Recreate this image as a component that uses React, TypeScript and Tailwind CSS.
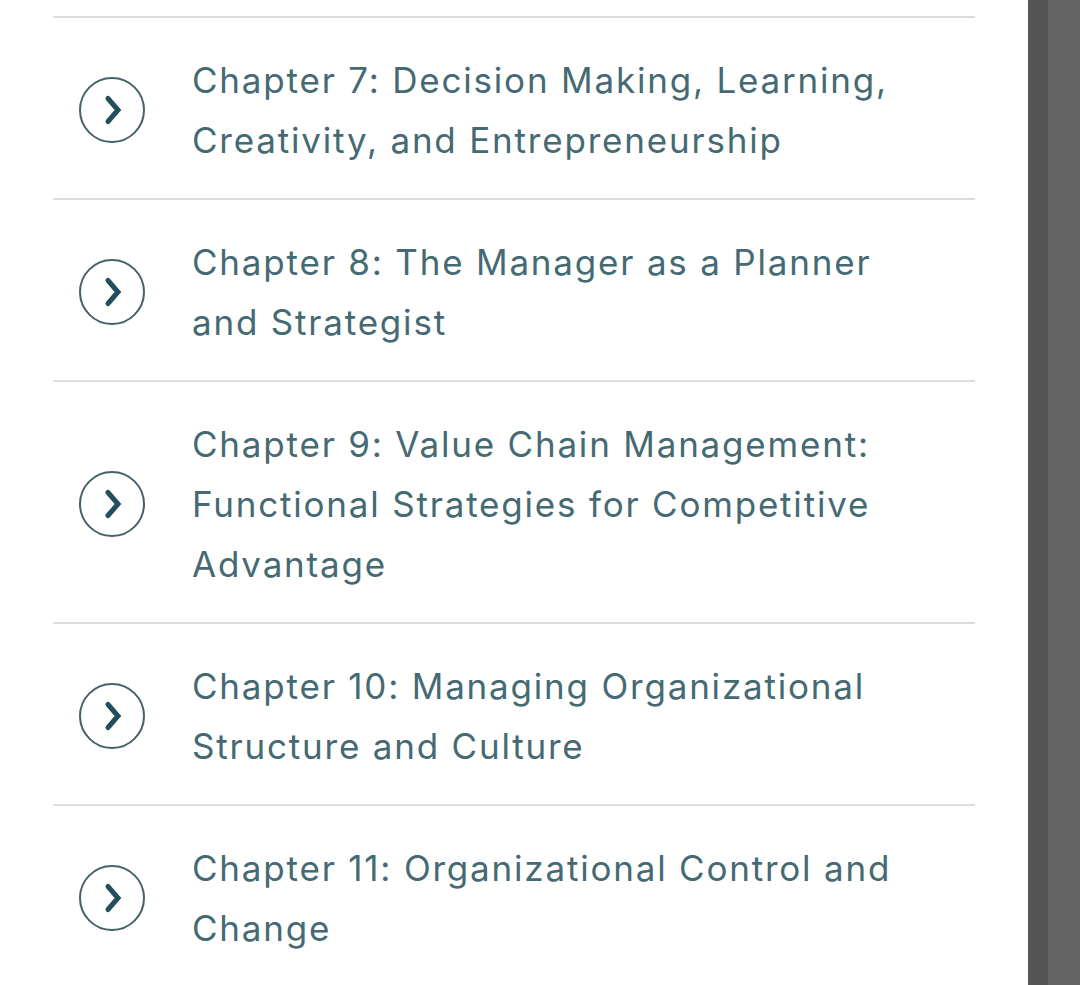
import React from "react";

const chapters = [
  ["Chapter 7: Decision Making, Learning,", "Creativity, and Entrepreneurship"],
  ["Chapter 8: The Manager as a Planner", "and Strategist"],
  ["Chapter 9: Value Chain Management:", "Functional Strategies for Competitive", "Advantage"],
  ["Chapter 10: Managing Organizational", "Structure and Culture"],
  ["Chapter 11: Organizational Control and", "Change"],
];

function Chevron() {
  return (
    <div className="w-[66px] h-[66px] shrink-0 rounded-full border-2 border-[#46616a] flex items-center justify-center">
      <svg width="22" height="32" viewBox="0 0 22 32" className="ml-[4px]">
        <path d="M5 4.5 L15 16 L5 27.5" fill="none" stroke="#214f5c" strokeWidth="5" strokeLinecap="round" strokeLinejoin="miter" />
      </svg>
    </div>
  );
}

export default function App() {
  return (
    <div className="w-[1080px] h-[985px] flex bg-white overflow-hidden" style={{ fontFamily: "Inter, Lato, sans-serif" }}>
      <div className="w-[1028px] pt-[16px]">
        <div className="ml-[53px] w-[922px] border-t-2 border-[#dadede]">
          {chapters.map((lines, i) => (
            <div key={i} className="flex items-center border-b-2 border-[#dadede] pl-[26px] pt-[32px] pb-[28px]">
              <Chevron />
              <div className="ml-[47px] text-[35px] leading-[60px] tracking-[1.8px] text-[#456a73] whitespace-nowrap">
                {lines.map((l, j) => (
                  <div key={j}>{l}</div>
                ))}
              </div>
            </div>
          ))}
        </div>
      </div>
      <div className="flex-1 flex">
        <div className="w-[20px] bg-[#555555]" />
        <div className="flex-1 bg-[#646464]" />
      </div>
    </div>
  );
}
